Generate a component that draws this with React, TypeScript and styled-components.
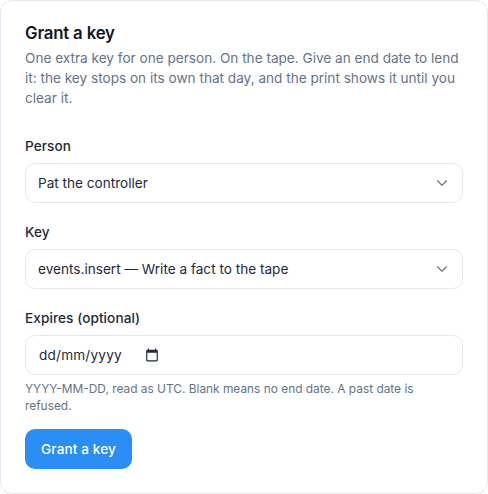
import React from "react";
import styled, { createGlobalStyle } from "styled-components";

const Global = createGlobalStyle`
	html, body {
		margin: 0;
		padding: 0;
		background: #ffffff;
	}
	* {
		box-sizing: border-box;
	}
`;

const Card = styled.form`
	width: 488px;
	height: 494px;
	background: #ffffff;
	border: 1px solid #e2e8f0;
	border-radius: 12px;
	padding: 21px 24px;
	font-family: Inter, sans-serif;
	color: #1e293b;
`;
const Title = styled.h2`
	margin: 0 0 4px;
	font-size: 16.8px;
	line-height: 22px;
	font-weight: 600;
	letter-spacing: -0.01em;
	color: #0f172a;
`;
const Intro = styled.p`
	margin: 0 0 29px;
	font-size: 13.6px;
	line-height: 20px;
	color: #64748b;
`;
const Field = styled.div`
	margin-bottom: 20px;
	&:last-of-type {
		margin-bottom: 15px;
	}
`;
const Label = styled.label`
	display: block;
	margin-bottom: 8px;
	font-size: 13.6px;
	line-height: 18px;
	font-weight: 500;
	letter-spacing: 0.08px;
`;
const Control = styled.div`
	display: flex;
	align-items: center;
	justify-content: space-between;
	height: 40px;
	padding: 0 11px 0 12px;
	border: 1px solid #e2e8f0;
	border-radius: 10px;
	font-size: 13.6px;
`;
const DateBox = styled(Control)`
	justify-content: flex-start;
	padding-left: 13px;
`;
const DateInput = styled.input`
	width: 106px;
	height: 38px;
	padding: 0;
	border: 0;
	outline: 0;
	font: 13.6px Inter, sans-serif;
	letter-spacing: 0.2px;
	color: #1e293b;
	background: transparent;
	&::placeholder {
		color: #1e293b;
		opacity: 1;
	}
`;
const Hint = styled.p`
	margin: 5px 0 0;
	font-size: 11.9px;
	line-height: 17px;
	color: #64748b;
`;
const Submit = styled.button`
	display: block;
	width: 107px;
	height: 40px;
	padding: 0;
	border: 0;
	border-radius: 10px;
	background: #2b8ef5;
	color: #ffffff;
	font: 500 13.6px Inter, sans-serif;
	letter-spacing: 0.1px;
`;

const Chevron = () => (
	<svg width="18" height="18" viewBox="0 0 24 24" fill="none" stroke="#6b7280" strokeWidth="1.5" strokeLinecap="round" strokeLinejoin="round">
		<path d="m6 9 6 6 6-6" />
	</svg>
);

const CalendarIcon = () => (
	<svg width="14" height="14" viewBox="0 0 24 24" fill="#1f2937">
		<path d="M20 3h-1V1h-2v2H7V1H5v2H4c-1.1 0-2 .9-2 2v16c0 1.1.9 2 2 2h16c1.1 0 2-.9 2-2V5c0-1.1-.9-2-2-2zm0 18H4V8h16v13z" />
	</svg>
);

const App = () => (
	<>
		<Global />
		<Card>
			<Title>Grant a key</Title>
			<Intro>
				One extra key for one person. On the tape. Give an end date to lend it: the key stops on its own that day, and the print shows it until you clear it.
			</Intro>
			<Field>
				<Label>Person</Label>
				<Control>
					Pat the controller
					<Chevron />
				</Control>
			</Field>
			<Field>
				<Label>Key</Label>
				<Control>
					events.insert — Write a fact to the tape
					<Chevron />
				</Control>
			</Field>
			<Field>
				<Label>Expires (optional)</Label>
				<DateBox>
					<DateInput placeholder="dd/mm/yyyy" />
					<CalendarIcon />
				</DateBox>
				<Hint>YYYY-MM-DD, read as UTC. Blank means no end date. A past date is refused.</Hint>
			</Field>
			<Submit type="button">Grant a key</Submit>
		</Card>
	</>
);

export default App;
